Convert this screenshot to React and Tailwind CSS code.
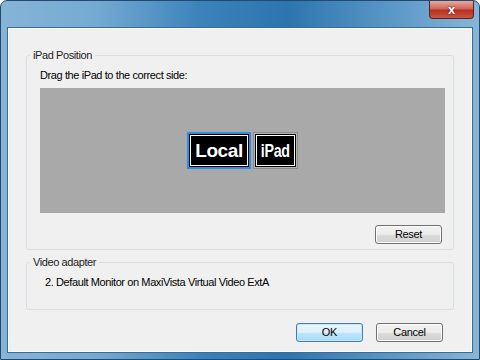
import React from "react";

const font = { fontFamily: '"Liberation Sans", Arial, sans-serif' };

const WinButton = ({ children, primary }) => (
  <button
    className={`h-[19px] w-[67px] rounded-[3px] border text-[11px] tracking-[-0.3px] text-black leading-none ${
      primary
        ? "border-[#3c7fb1] bg-[linear-gradient(180deg,#eaf6fd_0%,#d9f0fc_50%,#bee6fd_51%,#a7d9f5_100%)] shadow-[inset_0_0_0_1px_#c7e6f7]"
        : "border-[#707070] bg-[linear-gradient(180deg,#f2f2f2_0%,#ebebeb_50%,#dddddd_51%,#cfcfcf_100%)] shadow-[inset_0_0_0_1px_#fcfcfc]"
    }`}
  >
    {children}
  </button>
);

const SideBox = ({ label, active, narrow }) => (
  <div
    className={`h-[37px] p-[2px] ${narrow ? "w-[45px]" : "w-[64px]"} ${
      active ? "bg-[#2a8ee8]" : "bg-[#b4b4b4] shadow-[inset_0_0_0_1px_#8c8c8c]"
    }`}
  >
    <div className="h-full bg-black p-[1px]">
      <div className="h-full border border-white bg-black flex items-center justify-center overflow-hidden">
        <span
          className={`text-white font-bold text-[19px] leading-none ${narrow ? "scale-x-[0.75]" : ""}`}
        >
          {label}
        </span>
      </div>
    </div>
  </div>
);

export default function App() {
  return (
    <div
      className="w-[480px] h-[360px] flex flex-col rounded-t-[7px] border border-[#25496e] bg-[linear-gradient(90deg,#86b4d7_0%,#74aad2_20%,#3b82ba_42%,#2d75ae_60%,#5b98c7_82%,#88b5d7_100%)] text-[11px] tracking-[-0.4px] text-black"
      style={font}
    >
      {/* title bar */}
      <div className="h-[26px] flex justify-end items-start pr-[5px] shrink-0">
        <div className="w-[45px] h-[18px] rounded-b-[4px] border border-t-0 border-[#5a2420] bg-[linear-gradient(180deg,#e6aaa2_0%,#d0665a_45%,#b8301f_55%,#c85545_100%)] flex items-center justify-center">
          <span className="text-white font-bold text-[13px] leading-none tracking-normal [text-shadow:0_0_2px_#3a0a05]">
            x
          </span>
        </div>
      </div>

      {/* client area */}
      <div className="flex-1 mx-[6px] mb-[6px] border border-[#3e6b95] shadow-[inset_0_0_0_1px_#f8fbfd] bg-[#f0f0f0] flex flex-col">
        <fieldset className="mt-[21px] mx-[18px] border border-[#d5dfe5] rounded-[3px] px-[13px] pb-[5px] pt-0">
          <legend className="ml-[-10px] px-[3px] leading-[13px] text-[#1e1e1e]">iPad Position</legend>
          <div className="leading-[13px] mt-[7px] mb-[6px]">Drag the iPad to the correct side:</div>
          <div className="mr-[-5px] h-[125px] bg-[#a9a9a9] flex items-center justify-center gap-[2px]">
            <SideBox label="Local" active />
            <SideBox label="iPad" narrow />
          </div>
          <div className="flex justify-end mt-[12px] mr-[-2px]">
            <WinButton>Reset</WinButton>
          </div>
        </fieldset>

        <fieldset className="mt-[6px] mx-[18px] border border-[#d5dfe5] rounded-[3px] px-[18px] pb-[20px] pt-0">
          <legend className="ml-[-15px] px-[3px] leading-[13px] text-[#1e1e1e]">Video adapter</legend>
          <div className="leading-[13px] mt-[7px]">2. Default Monitor on MaxiVista Virtual Video ExtA</div>
        </fieldset>

        <div className="flex justify-end gap-[13px] mt-[13px] mr-[29px]">
          <WinButton primary>OK</WinButton>
          <WinButton>Cancel</WinButton>
        </div>
      </div>
    </div>
  );
}
